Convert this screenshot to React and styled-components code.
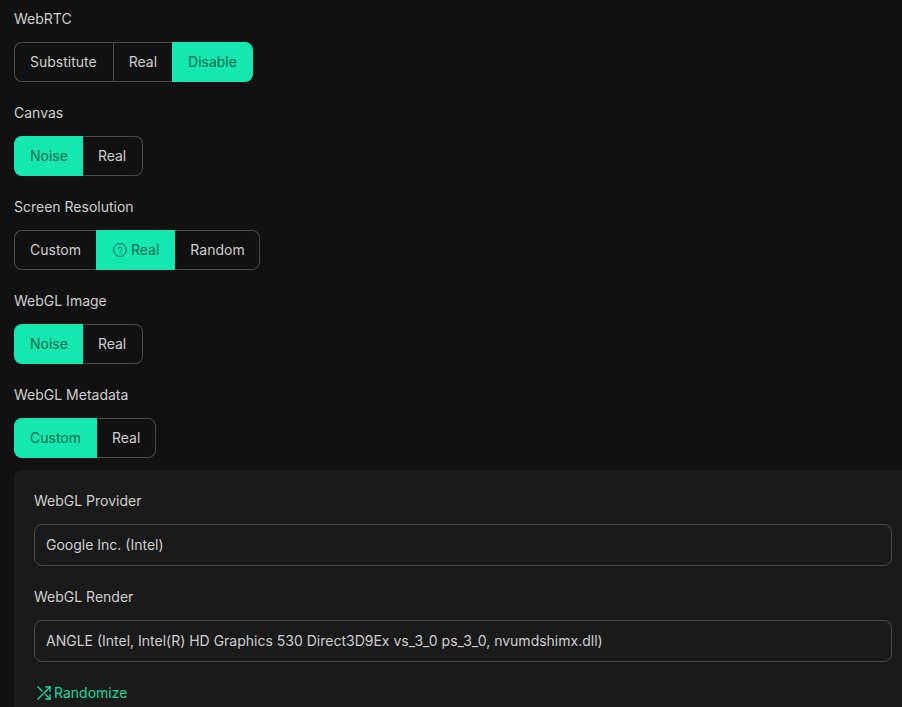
import React from 'react';
import styled, { createGlobalStyle } from 'styled-components';

const Global = createGlobalStyle`
  html, body { margin: 0; padding: 0; background: #111111; height: 100%; overflow: hidden; }
  body { font-family: Inter, "Liberation Sans", sans-serif; }
`;

const Page = styled.div`
  height: 707px;
  overflow: hidden;
  padding: 8px 0 0 14px;
  box-sizing: border-box;
`;

const Section = styled.section`
  margin-bottom: 20px;
`;

const Label = styled.div`
  font-size: 14px;
  line-height: 22px;
  color: #cfcfcf;
  margin-bottom: 12px;
`;

const Group = styled.div`
  display: inline-flex;
  height: 40px;
  box-sizing: border-box;
  vertical-align: top;
`;

const Segment = styled.div`
  display: flex;
  align-items: center;
  justify-content: center;
  gap: 4px;
  box-sizing: border-box;
  height: 40px;
  padding: 0 ${p => p.$pr}px 1px ${p => p.$pl}px;
  font-size: 14px;
  color: ${p => (p.$active ? '#0a6a4c' : '#cfcfcf')};
  background: ${p => (p.$active ? '#14e8b0' : 'transparent')};
  border: 1px solid ${p => (p.$active ? '#14e8b0' : '#4a4a4a')};
  border-left-width: ${p => (p.$first || p.$divider ? '1px' : '0')};
  border-right-width: ${p => (p.$last ? '1px' : '0')};
  border-radius: ${p => (p.$first ? '8px 0 0 8px' : p.$last ? '0 8px 8px 0' : '0')};
`;

const Panel = styled.div`
  margin-top: -8px;
  width: 898px;
  box-sizing: border-box;
  background: #1a1a1a;
  border-radius: 8px;
  padding: 20px 20px 12px;
`;

const Field = styled.div`
  margin-bottom: 20px;
`;

const Input = styled.div`
  height: 42px;
  width: 858px;
  box-sizing: border-box;
  border: 1px solid #4a4a4a;
  border-radius: 8px;
  padding: 0 11px 1px;
  display: flex;
  align-items: center;
  font-size: 14px;
  color: #cfcfcf;
  white-space: nowrap;
`;

const Randomize = styled.div`
  display: flex;
  align-items: center;
  gap: 2px;
  margin: 0 0 0 2px;
  font-size: 14px;
  line-height: 22px;
  color: #18d89e;
`;

const Help = () => (
  <svg width="14" height="14" viewBox="0 0 14 14" fill="none" stroke="currentColor" strokeWidth="1" strokeLinecap="round">
    <circle cx="7" cy="7" r="6.4" />
    <path d="M5.2 5.4a1.85 1.85 0 0 1 3.6.5c0 1.2-1.8 1.5-1.8 2.6" />
    <path d="M7 10.3v.1" />
  </svg>
);

const ShuffleIcon = () => (
  <svg width="16" height="16" viewBox="0 0 16 16" fill="none" stroke="currentColor" strokeWidth="1.4" strokeLinecap="square">
    <path d="M10 2h4v4" />
    <path d="M2 14 14 2" />
    <path d="M14 10v4h-4" />
    <path d="M9.8 9.8 14 14" />
    <path d="M2 2l4 4" />
  </svg>
);

const rows = [
  { label: 'WebRTC', items: [{ t: 'Substitute', pr: 16 }, { t: 'Real', divider: true }, { t: 'Disable', active: true, pl: 16 }] },
  { label: 'Canvas', items: [{ t: 'Noise', active: true }, { t: 'Real', pr: 16 }] },
  { label: 'Screen Resolution', items: [{ t: 'Custom' }, { t: 'Real', active: true, icon: true, pl: 17, pr: 16 }, { t: 'Random', pr: 14 }] },
  { label: 'WebGL Image', items: [{ t: 'Noise', active: true }, { t: 'Real', pr: 16 }] },
  { label: 'WebGL Metadata', items: [{ t: 'Custom', active: true, pr: 16 }, { t: 'Real' }] },
];

export default function App() {
  return (
    <Page>
      <Global />
      {rows.map(r => (
        <Section key={r.label}>
          <Label>{r.label}</Label>
          <Group>
            {r.items.map((it, i) => (
              <Segment
                key={it.t}
                $active={it.active}
                $first={i === 0}
                $last={i === r.items.length - 1}
                $divider={it.divider}
                $pl={it.pl ?? 15}
                $pr={it.pr ?? 15}
              >
                {it.icon && <Help />}
                {it.t}
              </Segment>
            ))}
          </Group>
        </Section>
      ))}
      <Panel>
        <Field>
          <Label>WebGL Provider</Label>
          <Input>Google Inc. (Intel)</Input>
        </Field>
        <Field>
          <Label>WebGL Render</Label>
          <Input>ANGLE (Intel, Intel(R) HD Graphics 530 Direct3D9Ex vs_3_0 ps_3_0, nvumdshimx.dll)</Input>
        </Field>
        <Randomize>
          <ShuffleIcon />
          Randomize
        </Randomize>
      </Panel>
    </Page>
  );
}
